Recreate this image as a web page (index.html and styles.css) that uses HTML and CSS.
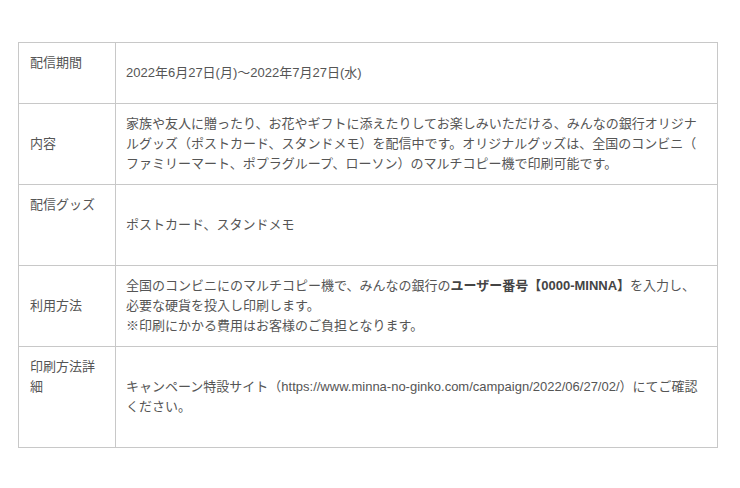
FILE: index.html
```html
<!DOCTYPE html>
<html lang="ja">
<head>
  <meta charset="UTF-8" />
  <meta name="viewport" content="width=device-width, initial-scale=1.0"/>
  <title>みんなの銀行 オリジナルグッズ</title>
  <link rel="stylesheet" href="styles.css">
</head>
<body>

  <table class="info">
    <tr class="row-s">
      <th class="top">配信期間</th>
      <td>2022年6月27日(月)〜2022年7月27日(水)</td>
    </tr>
    <tr class="row-m">
      <th>内容</th>
      <td>家族や友人に贈ったり、お花やギフトに添えたりしてお楽しみいただける、みんなの銀行オリジナルグッズ（ポストカード、スタンドメモ）を配信中です。オリジナルグッズは、全国のコンビニ（ファミリーマート、ポプラグループ、ローソン）のマルチコピー機で印刷可能です。</td>
    </tr>
    <tr class="row-m">
      <th class="top">配信グッズ</th>
      <td>ポストカード、スタンドメモ</td>
    </tr>
    <tr class="row-m">
      <th>利用方法</th>
      <td>全国のコンビニにのマルチコピー機で、みんなの銀行の<b>ユーザー番号【0000-MINNA】</b>を入力し、<br>必要な硬貨を投入し印刷します。<br>※印刷にかかる費用はお客様のご負担となります。</td>
    </tr>
    <tr class="row-l">
      <th class="top">印刷方法詳細</th>
      <td>キャンペーン特設サイト（https://www.minna-no-ginko.com/campaign/2022/06/27/02/）にてご確認ください。</td>
    </tr>
  </table>

</body>
</html>
```

FILE: styles.css
```css
:root {
  --text: #555555;
  --line: #c8c8c8;
}

body {
  font-family: 'Liberation Sans', 'Noto Sans CJK JP', sans-serif;
  margin: 0;
  padding: 42px 22px 0 18px;
  background: #ffffff;
  color: var(--text);
  font-size: 13px;
  line-height: 20px;
}

.info {
  width: 700px;
  border-collapse: collapse;
  table-layout: fixed;
}

.info th,
.info td {
  border: 1px solid var(--line);
  padding: 10px;
  text-align: left;
  vertical-align: middle;
  line-break: anywhere;
}

.info th {
  width: 75px;
  padding-left: 11px;
  font-weight: normal;
}

.info th.top {
  vertical-align: top;
}

.info b {
  font-weight: bold;
  color: #444444;
}

.row-s { height: 61px; }
.row-m { height: 81px; }
.row-l { height: 101px; }
```
